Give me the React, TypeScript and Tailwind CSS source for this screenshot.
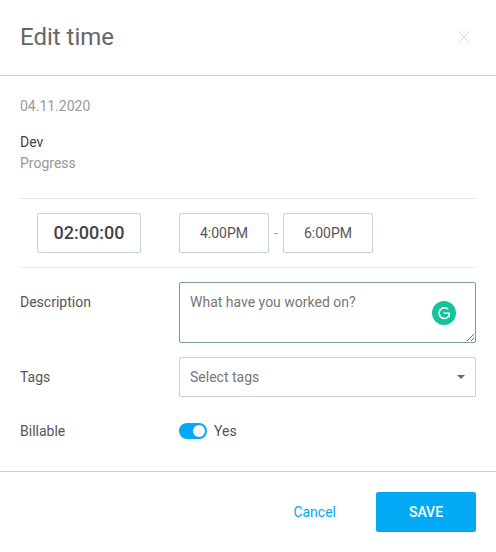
function TimeBox({ value, className }: { value: string; className: string }) {
  return (
    <div className={`flex h-10 items-center justify-center rounded-[2px] border border-[#c5d2dc] ${className}`}>
      {value}
    </div>
  );
}

export default function App() {
  return (
    <div className="h-[552px] w-[496px] bg-white font-['Roboto',sans-serif] text-sm text-[#555]">
      <header className="flex h-[76px] items-center justify-between border-b border-[#c6d0d9] pb-px pl-5 pr-[25px]">
        <h1 className="text-2xl leading-7 text-[#666]">Edit time</h1>
        <svg width="14" height="14" viewBox="0 0 14 14" className="text-[#d3dce3]" fill="none" stroke="currentColor" strokeWidth="1">
          <path d="M1 1l12 12M13 1L1 13" />
        </svg>
      </header>

      <div className="px-5">
        <div className="pt-[20px] leading-5 text-[#999]">04.11.2020</div>
        <div className="pt-[16px] leading-5 text-[#444]">Dev</div>
        <div className="pt-px leading-5 text-[#999]">Progress</div>

        <div className="mt-[25px] flex h-[70px] items-center border-y border-[#e8ecef] pl-[17px]">
          <TimeBox value="02:00:00" className="w-[104px] text-lg font-medium text-[#444]" />
          <TimeBox value="4:00PM" className="ml-[38px] w-[90px] text-[#555]" />
          <span className="w-[14px] text-center text-[#999]">-</span>
          <TimeBox value="6:00PM" className="w-[90px] text-[#555]" />
        </div>

        <div className="mt-[14px] flex">
          <label className="w-[159px] pt-[10px] leading-5">Description</label>
          <div className="relative h-[61px] flex-1">
            <textarea
              placeholder="What have you worked on?"
              className="block h-full w-full resize-y rounded-[2px] border border-[#7f98a8] px-[10px] py-[9px] leading-5 outline-none placeholder:text-[#777]"
            />
            <div className="absolute left-[253px] top-[19px] flex h-6 w-6 items-center justify-center rounded-full bg-[#15c39a]">
              <svg width="14" height="14" viewBox="0 0 14 14" fill="none" stroke="white" strokeWidth="1.6">
                <path d="M11.2 3.2A5.4 5.4 0 1 0 11.6 10.6" />
                <path d="M6.6 7.2h5.6v4" />
              </svg>
            </div>
          </div>
        </div>

        <div className="mt-[14px] flex items-center">
          <label className="w-[159px] leading-5">Tags</label>
          <div className="flex h-10 flex-1 items-center justify-between rounded-[2px] border border-[#c5d2dc] pl-[10px] pr-[10px] text-[#777]">
            <span>Select tags</span>
            <span className="h-0 w-0 border-x-[4px] border-t-[4px] border-x-transparent border-t-[#666]" />
          </div>
        </div>

        <div className="mt-[24px] flex items-center">
          <label className="w-[159px] leading-5">Billable</label>
          <div className="flex h-4 w-7 items-center justify-end rounded-full bg-[#03a9f4] pr-[2px]">
            <span className="h-3 w-3 rounded-full bg-white" />
          </div>
          <span className="ml-[7px] leading-5">Yes</span>
        </div>
      </div>

      <footer className="mt-[30px] flex h-[81px] items-start justify-end border-t border-[#c6d0d9] pr-5 pt-5">
        <button type="button" className="mr-[40px] h-10 text-[#03a9f4]">Cancel</button>
        <button type="button" className="h-10 w-[100px] rounded-[2px] bg-[#03a9f4] font-medium text-white">SAVE</button>
      </footer>
    </div>
  );
}
